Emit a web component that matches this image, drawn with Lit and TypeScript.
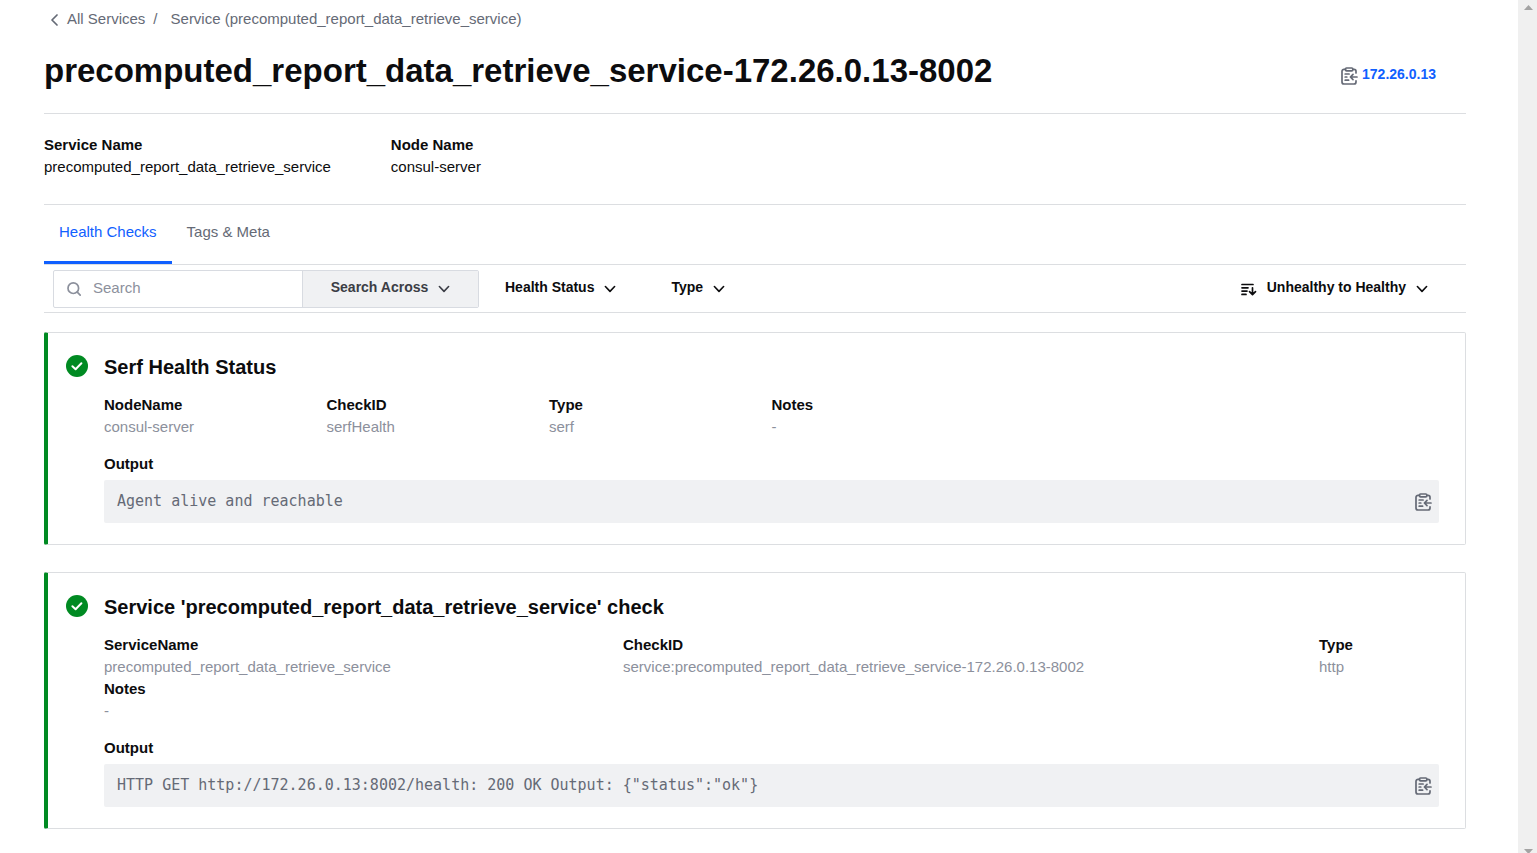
import { LitElement, html, css, svg } from "lit";
import { customElement, property } from "lit/decorators.js";

interface Field {
  label: string;
  value: string;
}

interface Check {
  name: string;
  fields: Field[];
  wide: boolean;
  output: string;
}

const CHECKS: Check[] = [
  {
    name: "Serf Health Status",
    wide: false,
    fields: [
      { label: "NodeName", value: "consul-server" },
      { label: "CheckID", value: "serfHealth" },
      { label: "Type", value: "serf" },
      { label: "Notes", value: "-" },
    ],
    output: "Agent alive and reachable",
  },
  {
    name: "Service 'precomputed_report_data_retrieve_service' check",
    wide: true,
    fields: [
      { label: "ServiceName", value: "precomputed_report_data_retrieve_service" },
      { label: "CheckID", value: "service:precomputed_report_data_retrieve_service-172.26.0.13-8002" },
      { label: "Type", value: "http" },
      { label: "Notes", value: "-" },
    ],
    output: 'HTTP GET http://172.26.0.13:8002/health: 200 OK Output: {"status":"ok"}',
  },
];

const chevron = html`<svg class="chevron" width="12" height="8" viewBox="0 0 12 8" aria-hidden="true">
  <path d="M1.4 1.5 6 6.4l4.6-4.9" fill="none" stroke="currentColor" stroke-width="1.6" stroke-linecap="round" stroke-linejoin="round" />
</svg>`;

const copyShape = svg`<g fill="none" stroke="currentColor" stroke-width="1.7" stroke-linecap="round" stroke-linejoin="round">
  <path d="M4.5 2.3H3A2 2 0 0 0 1 4.3V15a2 2 0 0 0 2 2h10a2 2 0 0 0 2-2v-1.2M11.8 2.3H13a2 2 0 0 1 2 2v1.6" />
  <rect x="4.5" y="1" width="7.3" height="2.8" rx="1" />
  <path d="M16 10H9.6M12 7.4 9.4 10l2.6 2.6" />
  <path d="M4.2 7h3.9M4.2 10h1.6M4.2 13.2h3.4" />
</g>`;

const base = css`
  * {
    box-sizing: border-box;
  }
  a {
    color: inherit;
    text-decoration: none;
  }
  button {
    font: inherit;
    color: inherit;
    background: none;
    border: 0;
    padding: 0;
    cursor: pointer;
  }
  dl,
  dd,
  h1,
  h2,
  h3,
  pre {
    margin: 0;
  }
  svg {
    display: block;
    flex: none;
  }
`;

@customElement("copy-button")
export class CopyButton extends LitElement {
  @property() value = "";

  static styles = [
    base,
    css`
      :host {
        display: block;
        color: #656a76;
      }
      .copy {
        display: block;
      }
    `,
  ];

  private copy() {
    navigator.clipboard?.writeText(this.value);
  }

  render() {
    return html`<button class="copy" type="button" aria-label="Copy ${this.value}" @click=${this.copy}>
      <svg width="17" height="18" viewBox="0 0 17 18" aria-hidden="true">${copyShape}</svg>
    </button>`;
  }
}

@customElement("health-check")
export class HealthCheck extends LitElement {
  @property({ attribute: false }) check!: Check;

  static styles = [
    base,
    css`
      :host {
        display: block;
      }
      .card {
        display: flex;
        gap: 16px;
        padding: 22px 26px 21px 18px;
        border: 1px solid #dcdee1;
        border-left: 4px solid #008a22;
        border-radius: 2px;
      }
      .body {
        flex: 1;
        min-width: 0;
      }
      .name {
        font-size: 20px;
        line-height: 24px;
        font-weight: 700;
      }
      .fields {
        display: grid;
        grid-template-columns: repeat(6, 1fr);
        padding-top: 15px;
        line-height: 22px;
      }
      .fields.wide {
        grid-template-columns: 519fr 696fr 120fr;
      }
      dt,
      .label {
        font-weight: 700;
      }
      dd {
        color: #8c909c;
      }
      .label {
        padding: 15px 0 5px;
        font-size: 15px;
        line-height: 22px;
      }
      .output {
        display: flex;
        align-items: center;
        justify-content: space-between;
        padding: 11px 7px 11px 13px;
        border-radius: 2px;
        background: #f0f1f3;
      }
      pre {
        font: 15px/21px "DejaVu Sans Mono", monospace;
        color: #656a76;
        white-space: pre-wrap;
      }
    `,
  ];

  render() {
    const c = this.check;
    return html`<article class="card">
      <svg width="22" height="22" viewBox="0 0 22 22" role="img" aria-label="Passing">
        <circle cx="11" cy="11" r="11" fill="#008a22" />
        <path d="m6.4 11.3 3.2 3 5.8-6" fill="none" stroke="#fff" stroke-width="2" stroke-linecap="round" stroke-linejoin="round" />
      </svg>
      <div class="body">
        <h2 class="name">${c.name}</h2>
        <dl class="fields ${c.wide ? "wide" : ""}">
          ${c.fields.map((f) => html`<div><dt>${f.label}</dt><dd>${f.value}</dd></div>`)}
        </dl>
        <h3 class="label">Output</h3>
        <div class="output">
          <pre>${c.output}</pre>
          <copy-button .value=${c.output}></copy-button>
        </div>
      </div>
    </article>`;
  }
}

@customElement("app-root")
export class AppRoot extends LitElement {
  static styles = [
    base,
    css`
      :host {
        display: flex;
        height: 100vh;
        overflow: hidden;
        background: #fff;
        color: #0c0c0e;
        font: 15px/22px "Liberation Sans", Arial, sans-serif;
      }
      .page {
        flex: 1;
        min-width: 0;
        padding: 8px 52px 24px 44px;
      }
      .crumbs {
        display: flex;
        align-items: center;
        padding-left: 6px;
        color: #656a76;
      }
      .back {
        display: flex;
        align-items: center;
        gap: 8px;
      }
      .slash {
        padding: 0 13px 0 8px;
      }
      .head {
        display: flex;
        align-items: center;
        justify-content: space-between;
        padding: 21px 30px 22px 0;
        border-bottom: 1px solid #dcdee1;
      }
      .title {
        font-size: 33px;
        line-height: 40px;
        font-weight: 700;
      }
      .address {
        display: flex;
        align-items: center;
        gap: 4px;
        padding-top: 10px;
        font-size: 14px;
        line-height: 18px;
        font-weight: 700;
      }
      .address a {
        color: #1060ff;
        padding-bottom: 4px;
      }
      .facts {
        display: flex;
        gap: 60px;
        padding: 20px 0 26px;
        border-bottom: 1px solid #dcdee1;
      }
      dt {
        font-weight: 700;
      }
      .tabs {
        display: flex;
        border-bottom: 1px solid #dcdee1;
        color: #656a76;
      }
      .tab {
        padding: 16px 15px 18px;
        border-bottom: 3px solid transparent;
      }
      .tab.active {
        color: #1060ff;
        border-color: #1060ff;
      }
      .filters {
        display: flex;
        align-items: center;
        padding: 5px 38px 4px 9px;
        border-bottom: 1px solid #dcdee1;
        font-size: 14px;
        line-height: 20px;
        font-weight: 700;
      }
      .search {
        display: flex;
        width: 426px;
        height: 38px;
        border: 1px solid #d8dbe1;
        border-radius: 2px;
        overflow: hidden;
      }
      .field {
        display: flex;
        align-items: center;
        gap: 11px;
        flex: 1;
        min-width: 0;
        padding: 0 0 2px 13px;
        color: #8c909c;
      }
      .field input {
        flex: 1;
        min-width: 0;
        padding: 0;
        border: 0;
        outline: 0;
        background: none;
        color: #0c0c0e;
        font: 15px/22px "Liberation Sans", Arial, sans-serif;
      }
      .field input::placeholder {
        color: #8c909c;
        opacity: 1;
      }
      .menu {
        display: flex;
        align-items: center;
        justify-content: center;
        gap: 10px;
        padding-bottom: 4px;
      }
      .menu svg {
        margin-top: 4px;
      }
      .across {
        width: 176px;
        border-left: 1px solid #d8dbe1;
        background: #f0f1f3;
        color: #3b3d45;
      }
      .status {
        margin-left: 26px;
      }
      .type {
        margin-left: 55px;
      }
      .order {
        margin-left: auto;
      }
      .checks {
        display: grid;
        gap: 27px;
        padding-top: 19px;
      }
      .scroll {
        display: flex;
        flex-direction: column;
        justify-content: space-between;
        align-items: center;
        width: 19px;
        padding: 5px 0 0 2px;
        background: #f0f0f0;
      }
    `,
  ];

  render() {
    return html`
      <main class="page">
        <nav class="crumbs" aria-label="Breadcrumb">
          <a class="back" href="#services">
            <svg width="9" height="13" viewBox="0 0 9 13" aria-hidden="true">
              <path d="M7 2 2 7l5 5" fill="none" stroke="currentColor" stroke-width="1.7" stroke-linecap="round" stroke-linejoin="round" />
            </svg>
            All Services
          </a>
          <span class="slash">/</span>
          <a href="#service">Service (precomputed_report_data_retrieve_service)</a>
        </nav>
        <header class="head">
          <h1 class="title">precomputed_report_data_retrieve_service-172.26.0.13-8002</h1>
          <div class="address">
            <copy-button value="172.26.0.13"></copy-button>
            <a href="#address">172.26.0.13</a>
          </div>
        </header>
        <dl class="facts">
          <div><dt>Service Name</dt><dd>precomputed_report_data_retrieve_service</dd></div>
          <div><dt>Node Name</dt><dd>consul-server</dd></div>
        </dl>
        <nav class="tabs" aria-label="Sections">
          <a class="tab active" href="#health-checks" aria-current="page">Health Checks</a>
          <a class="tab" href="#tags-meta">Tags &amp; Meta</a>
        </nav>
        <form class="filters" @submit=${(e: Event) => e.preventDefault()}>
          <div class="search">
            <label class="field">
              <svg width="15" height="15" viewBox="0 0 15 15" aria-hidden="true">
                <g fill="none" stroke="currentColor" stroke-width="1.7" stroke-linecap="round">
                  <circle cx="6.3" cy="7.2" r="5.3" />
                  <path d="m10.3 11.2 2.9 2.9" />
                </g>
              </svg>
              <input type="text" placeholder="Search" aria-label="Search" />
            </label>
            <button class="menu across" type="button" aria-haspopup="menu">Search Across ${chevron}</button>
          </div>
          <button class="menu status" type="button" aria-haspopup="menu">Health Status ${chevron}</button>
          <button class="menu type" type="button" aria-haspopup="menu">Type ${chevron}</button>
          <button class="menu order" type="button" aria-haspopup="menu">
            <svg class="sort" width="16" height="13" viewBox="0 0 16 13" aria-hidden="true">
              <path d="M1 1.5h11M1 4.8h6M1 8.1h5M1 11.4h4M11.5 4.8v6.4M8.5 8.6l3 3 3-3" fill="none" stroke="currentColor" stroke-width="1.7" stroke-linecap="round" stroke-linejoin="round" />
            </svg>
            Unhealthy to Healthy ${chevron}
          </button>
        </form>
        <section class="checks" aria-label="Health Checks">
          ${CHECKS.map((c) => html`<health-check .check=${c}></health-check>`)}
        </section>
      </main>
      <div class="scroll" aria-hidden="true">
        <svg width="9" height="5" viewBox="0 0 9 5"><path d="M0 5 4.5 0 9 5z" fill="#a3a3a3" /></svg>
        <svg width="9" height="4" viewBox="0 0 9 4"><path d="M0 0h9L5.4 4H3.6z" fill="#a3a3a3" /></svg>
      </div>
    `;
  }
}
